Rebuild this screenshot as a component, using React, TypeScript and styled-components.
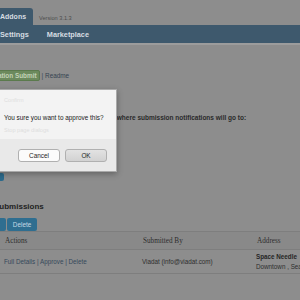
import React from 'react';
import styled, { createGlobalStyle } from 'styled-components';

const Global = createGlobalStyle`
  html, body { margin: 0; padding: 0; }
  body {
    width: 300px;
    height: 300px;
    overflow: hidden;
    background: #8c8c8c;
    font-family: "Liberation Sans", Arial, sans-serif;
  }
`;

const Screen = styled.div`
  position: relative;
  width: 300px;
  height: 300px;
  overflow: hidden;
  background: #8d8d8d;
`;

// page is scrolled sideways, so its left gutter sits off screen
const Content = styled.div`
  margin-left: -40px;
  width: 420px;
`;

const TabRow = styled.div`
  height: 25px;
  display: flex;
  align-items: flex-end;
`;

const Tab = styled.div`
  height: 17px;
  padding: 0 7px 0 40px;
  background: #3e596d;
  border-top-right-radius: 3px;
  color: #d6dde2;
  font-weight: bold;
  font-size: 7px;
  display: flex;
  align-items: center;
`;

const Version = styled.span`
  margin: 0 0 4px 6px;
  color: #4e4e4e;
  font-size: 5.6px;
`;

const NavBar = styled.div`
  height: 18px;
  background: #3e596d;
  padding-left: 40px;
  display: flex;
  align-items: center;
  gap: 18px;
  border-bottom: 2px solid #9c9c9c;
`;

const NavItem = styled.span`
  color: #d6dde2;
  font-weight: bold;
  font-size: 7.3px;
`;

const LinkRow = styled.div`
  margin-top: 25px;
  height: 10px;
  display: flex;
  align-items: center;
  gap: 2px;
  font-size: 6.4px;
`;

const GreenButton = styled.span<{ $offset: number }>`
  margin-left: ${p => p.$offset}px;
  height: 9px;
  padding: 0 2px;
  background: #6c8a5d;
  border: 1px solid #5b7a4d;
  border-radius: 2px;
  color: #c3d3b8;
  font-weight: bold;
  display: flex;
  align-items: center;
`;

const Plain = styled.span`
  color: #364452;
`;

const Notice = styled.p`
  margin: 34px 0 0 20px;
  font-size: 6.5px;
  font-weight: bold;
  color: #2a2a2a;
  white-space: nowrap;
`;

// the start of the sentence sits under the dialog
const Lead = styled.span`
  display: inline-block;
  width: 135px;
  overflow: hidden;
  text-align: right;
  vertical-align: bottom;
`;

const SaveButton = styled.div`
  margin: 52px 0 0 20px;
  width: 24px;
  height: 8px;
  background: #2d6b8c;
  border-radius: 2px;
`;

const Heading = styled.h2`
  margin: 21px 0 0 34px;
  font-size: 8px;
  font-weight: bold;
  color: #222;
`;

const Bulk = styled.div`
  margin: 7px 0 0 10px;
  display: flex;
  gap: 1px;
`;

const BulkButton = styled.span`
  height: 13px;
  padding: 0 6px;
  background: #2f6e90;
  color: #c6d8e3;
  font-size: 6.4px;
  display: flex;
  align-items: center;
  border-radius: 2px;
`;

const Table = styled.div`
  margin: 0 0 0 40px;
  display: grid;
  grid-template-columns: 138px 114px 1fr;
`;

const HeadCell = styled.div`
  height: 17px;
  padding-left: 5px;
  display: flex;
  align-items: center;
  background: #898989;
  border-top: 1px solid #7e7e7e;
  border-bottom: 1px solid #7e7e7e;
  font-family: "Liberation Serif", "Times New Roman", serif;
  font-size: 7.2px;
  color: #2e2e2e;
`;

const Cell = styled.div`
  height: 23px;
  padding-left: 4px;
  display: flex;
  flex-direction: column;
  justify-content: center;
  border-bottom: 1px solid #7e7e7e;
  font-size: 6.3px;
  color: #2d2d2d;
  line-height: 10px;
`;

const RowLink = styled.span`
  color: #35495b;
`;

const Strong = styled.span`
  font-weight: bold;
  color: #262626;
`;

const Dialog = styled.div`
  position: absolute;
  left: -20px;
  top: 89px;
  width: 137px;
  height: 83px;
  background: #f3f3f3;
  border: 1px solid #a9a9a9;
  box-shadow: 0 2px 6px rgba(0, 0, 0, 0.3);
  display: flex;
  flex-direction: column;
  box-sizing: border-box;
`;

const DialogBody = styled.div`
  flex: 1;
  padding: 6px 0 0 23px;
  font-size: 6.3px;
`;

const Faint = styled.div`
  color: #dedede;
  font-size: 5.6px;
  line-height: 8px;
`;

const Message = styled.div`
  margin-top: 10px;
  color: #202020;
  font-size: 6.4px;
  line-height: 8px;
`;

const DialogFoot = styled.div`
  height: 32px;
  background: #e9e9e9;
  display: flex;
  align-items: center;
  padding-left: 37px;
  gap: 5px;
`;

const DlgButton = styled.button<{ $primary?: boolean }>`
  width: 42px;
  height: 13px;
  padding: 0;
  font-family: "Liberation Sans", Arial, sans-serif;
  font-size: 6.4px;
  color: #1e1e1e;
  border: 1px solid #b0b0b0;
  border-radius: 3px;
  background: ${p => (p.$primary ? 'linear-gradient(#e2e2e2, #d2d2d2)' : '#fbfbfb')};
`;

export default function App() {
  return (
    <Screen>
      <Global />
      <Content>
        <TabRow>
          <Tab>Addons</Tab>
          <Version>Version 3.1.3</Version>
        </TabRow>
        <NavBar>
          <NavItem>Settings</NavItem>
          <NavItem>Marketplace</NavItem>
        </NavBar>
        <LinkRow>
          <GreenButton $offset={15}>Notification Submit</GreenButton>
          <Plain>| Readme</Plain>
        </LinkRow>
        <Notice>
          <Lead>Enter the email address</Lead> where submission notifications will go to:
        </Notice>
        <SaveButton />
        <Heading>Submissions</Heading>
        <Bulk>
          <BulkButton>Approve</BulkButton>
          <BulkButton>Delete</BulkButton>
        </Bulk>
        <Table>
          <HeadCell>Actions</HeadCell>
          <HeadCell>Submitted By</HeadCell>
          <HeadCell>Address</HeadCell>
          <Cell>
            <RowLink>Full Details | Approve | Delete</RowLink>
          </Cell>
          <Cell>Viadat (info@viadat.com)</Cell>
          <Cell>
            <Strong>Space Needle</Strong>
            <span>Downtown , Seattle</span>
          </Cell>
        </Table>
      </Content>
      <Dialog>
        <DialogBody>
          <Faint>Confirm</Faint>
          <Message>You sure you want to approve this?</Message>
          <Faint style={{ marginTop: 4 }}>Stop page dialogs</Faint>
        </DialogBody>
        <DialogFoot>
          <DlgButton>Cancel</DlgButton>
          <DlgButton $primary>OK</DlgButton>
        </DialogFoot>
      </Dialog>
    </Screen>
  );
}
